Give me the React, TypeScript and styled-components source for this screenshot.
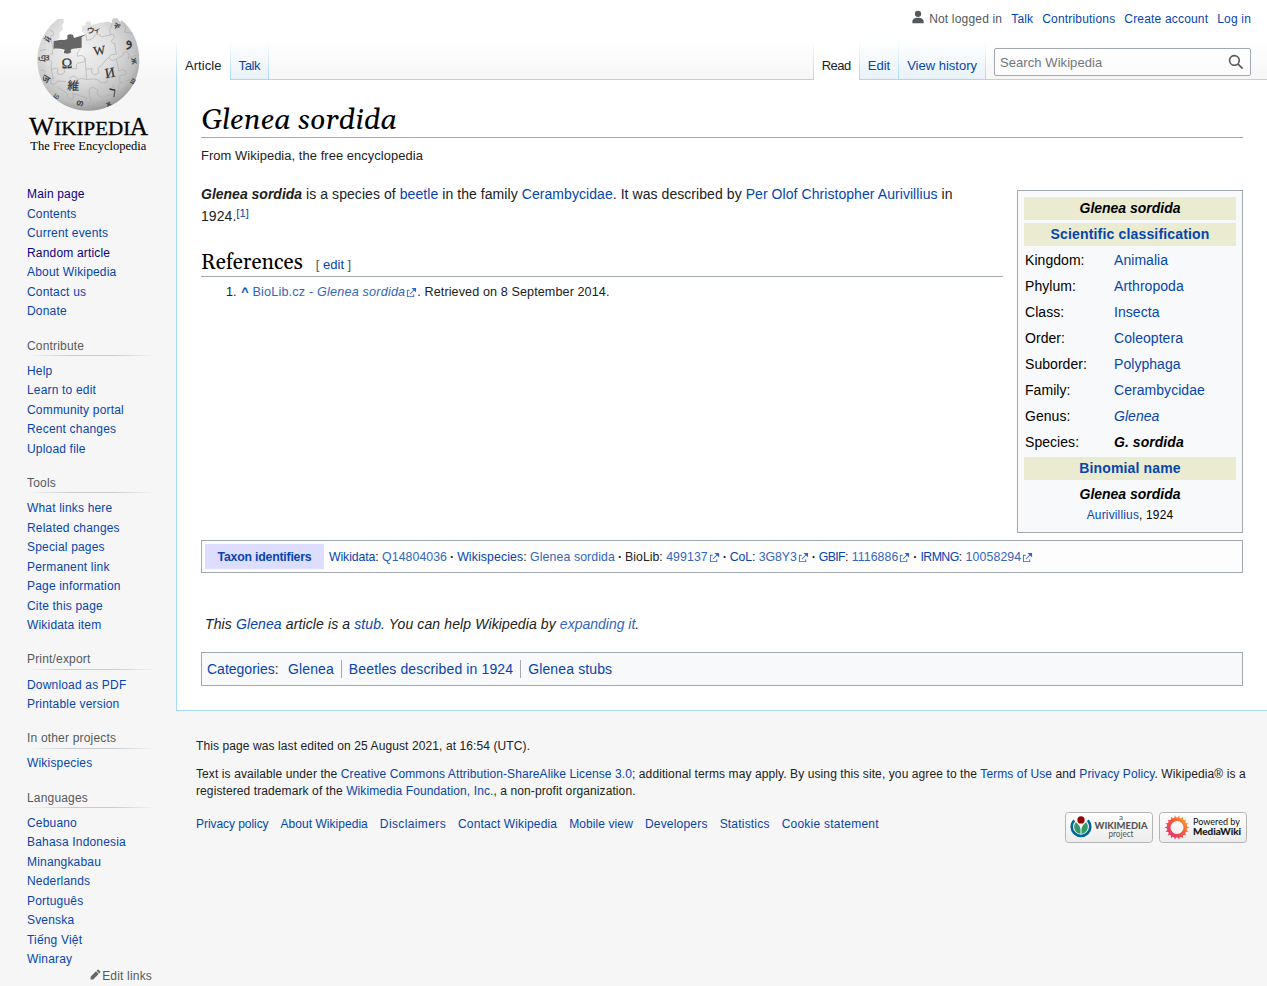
import React from 'react';
import styled, { createGlobalStyle } from 'styled-components';

const GlobalStyle = createGlobalStyle`
  *, *::before, *::after { box-sizing: border-box; }
  html, body { margin: 0; padding: 0; }
  body { background: #f6f6f6; font-family: "Liberation Sans", Arial, sans-serif; color: #202122; }
  h1, h2, h3, p, ul, ol { margin: 0; padding: 0; font-weight: normal; }
  ul, ol { list-style: none; }
`;

const serif = `"Linux Libertine", Georgia, Gelasio, "Liberation Serif", serif`;

const Link = styled.a<{ $visited?: boolean; $external?: boolean; $track?: number }>`
  color: ${(p) => (p.$visited ? '#0b0080' : p.$external ? '#3366bb' : '#0645ad')};
  letter-spacing: ${(p) => (p.$track === undefined ? 'inherit' : `${p.$track}px`)};
  text-decoration: none;
  white-space: nowrap;
`;

const Page = styled.div`
  display: grid;
  grid-template-columns: 176px 1fr;
  min-height: 986px;
  background: linear-gradient(to bottom, #fff 50%, #f6f6f6 100%) top / 100% 80px no-repeat #f6f6f6;
`;

const Sidebar = styled.aside`
  display: flex;
  flex-direction: column;
  letter-spacing: 0.18px;
`;

const Logo = styled.svg`
  display: block;
  width: 176px;
  height: 160px;
  margin-bottom: 25.4px;
  letter-spacing: 0;
`;

const Portal = styled.nav`
  padding: 0 19px 14.7px 27px;
  font-size: 12px;
`;

const PortalHeading = styled.h3`
  font-size: 12px;
  line-height: 19.5px;
  color: #54595d;
  margin-bottom: 5.7px;
  background: linear-gradient(to right, rgba(200, 204, 209, 0) 0, #c8ccd1 33%, #c8ccd1 66%, rgba(200, 204, 209, 0) 100%) bottom / 100% 1px no-repeat;
`;

const PortalItem = styled.li`
  line-height: 13.5px;
  padding: 3px 0;
`;

const EditLinks = styled.div`
  display: flex;
  align-items: center;
  justify-content: flex-end;
  gap: 1px;
  margin-top: -17.4px;
  padding-right: 24px;
  font-size: 12px;
  line-height: 18px;
  color: #54595d;
  svg { margin-top: -3px; }
`;

const Column = styled.div`
  min-width: 0;
  display: flex;
  flex-direction: column;
`;

const Header = styled.header`
  height: 80px;
  display: flex;
  flex-direction: column;
`;

const Personal = styled.ul`
  height: 40px;
  display: flex;
  justify-content: flex-end;
  gap: 9px;
  padding: 12px 16px 0 0;
  font-size: 12px;
  line-height: 14px;
  letter-spacing: 0.18px;
`;

const Anonymous = styled.li`
  display: flex;
  gap: 4px;
  color: #54595d;
  svg { margin-top: -2px; }
`;

const fade = 'linear-gradient(to bottom, #fff 0, #a7d7f9 100%)';

const TabBar = styled.div`
  height: 40px;
  display: flex;
  background: ${fade} left / 1px 100% no-repeat, linear-gradient(#a7d7f9, #a7d7f9) bottom / 100% 1px no-repeat;
`;

const Tabs = styled.ul<{ $right?: boolean }>`
  display: flex;
  padding-left: 1px;
  margin-left: ${(p) => (p.$right ? 'auto' : '0')};
  background: ${fade} left / 1px 100% no-repeat;
`;

const Tab = styled.li<{ $selected?: boolean; $track?: number }>`
  padding: 18px 8px 0;
  border-right: 1px solid transparent;
  font-size: 13px;
  line-height: 15px;
  letter-spacing: ${(p) => p.$track ?? 0}px;
  white-space: nowrap;
  color: #202122;
  background: ${fade} right / 1px 100% no-repeat border-box,
    ${(p) =>
      p.$selected
        ? 'linear-gradient(#fff, #fff)'
        : 'linear-gradient(#a7d7f9, #a7d7f9) bottom / 100% 1px no-repeat, linear-gradient(to bottom, #fff 0, #e8f2f8 100%)'};
`;

const Search = styled.div`
  width: 257px;
  height: 28px;
  margin: 8px 16px 0 8px;
  padding: 0 6px 0 5px;
  display: flex;
  align-items: center;
  justify-content: space-between;
  border: 1px solid #a2a9b1;
  border-radius: 2px;
  background: rgba(255, 255, 255, 0.5);
  font-size: 13px;
  letter-spacing: 0.07px;
  color: #72777d;
`;

const Content = styled.main`
  border-left: 1px solid #a7d7f9;
  border-bottom: 1px solid #a7d7f9;
  background: #fff;
  padding: 20px 24px 24px;
  font-size: 14px;
  line-height: 22.4px;
`;

const Title = styled.h1`
  height: 38px;
  border-bottom: 1px solid #a2a9b1;
  font-family: ${serif};
  font-size: 28.8px;
  line-height: 41px;
  font-style: italic;
  color: #000;
`;

const Tagline = styled.div`
  margin-top: 7px;
  font-size: 12.88px;
  line-height: 21px;
  letter-spacing: 0.08px;
`;

const Body = styled.div`
  display: flex;
  gap: 14px;
  margin-top: 17px;
`;

const Article = styled.div`
  flex: 1;
`;

const Lead = styled.p`
  letter-spacing: 0.064px;
  b { letter-spacing: 0; }
`;

const NoWrap = styled.span`
  white-space: nowrap;
`;

const Cite = styled.sup`
  font-size: 11.2px;
  line-height: 1;
  vertical-align: 4px;
`;

const SectionHeading = styled.h2`
  margin-top: 19.2px;
  height: 30px;
  border-bottom: 1px solid #a2a9b1;
  font-family: ${serif};
  font-size: 21px;
  line-height: 32px;
  color: #000;
`;

const EditSection = styled.span`
  margin-left: 13px;
  font-family: "Liberation Sans", Arial, sans-serif;
  font-size: 13px;
  color: #54595d;
`;

const References = styled.ol`
  margin-top: 5.2px;
  padding-left: 25px;
  font-size: 12.6px;
  line-height: 20.2px;
  letter-spacing: 0.1px;
`;

const BackLink = styled(Link)`
  font-weight: bold;
  margin: 0 0 0 1px;
`;

const Infobox = styled.aside`
  width: 226px;
  height: 343px;
  margin-top: 7px;
  padding: 6px;
  border: 1px solid #a2a9b1;
  background: #f8f9fa;
  color: #000;
  display: flex;
  flex-direction: column;
  gap: 3px;
  line-height: 21px;
  letter-spacing: 0.05px;
`;

const BoxBand = styled.div<{ $plain?: boolean }>`
  height: 23px;
  padding-top: 1px;
  text-align: center;
  font-weight: bold;
  background: ${(p) => (p.$plain ? 'transparent' : 'rgb(235, 235, 210)')};
  i { letter-spacing: -0.02px; }
`;

const BoxRow = styled.div`
  height: 23px;
  padding: 1px;
  display: grid;
  grid-template-columns: 89px 1fr;
`;

const Authority = styled.div`
  margin-top: -4px;
  text-align: center;
  font-size: 11.9px;
  letter-spacing: 0.19px;
`;

const Taxonbar = styled.div`
  height: 33px;
  margin-top: 7px;
  padding: 3px;
  display: flex;
  border: 1px solid #a2a9b1;
  background: #fdfdfd;
  font-size: 12.32px;
  line-height: 26px;
`;

const TaxonHeading = styled.div`
  width: 119px;
  height: 25px;
  margin-right: 5px;
  text-align: center;
  font-weight: bold;
  background: #ddf;
`;

const Dot = styled.b`
  margin: 0 3px;
`;

const Stub = styled.p`
  margin: 40px 0 0 4px;
  font-style: italic;
  letter-spacing: 0.115px;
`;

const Categories = styled.div`
  height: 34px;
  margin-top: 17px;
  padding: 5px;
  display: flex;
  align-items: center;
  border: 1px solid #a2a9b1;
  background: #f8f9fa;
`;

const Category = styled.span<{ $first?: boolean }>`
  padding: 0 7px 0 ${(p) => (p.$first ? 5.6 : 7)}px;
  line-height: 18px;
  letter-spacing: ${(p) => (p.$first ? 0.1 : 0.13)}px;
  border-left: ${(p) => (p.$first ? 'none' : '1px solid #a2a9b1')};
`;

const Footer = styled.footer`
  padding: 26.8px 20px 0;
  font-size: 12px;
  line-height: 16.8px;
`;

const FooterText = styled.p`
  margin: 0 -6px 11.2px 0;
  letter-spacing: 0.098px;
`;

const FooterRow = styled.div`
  display: flex;
  justify-content: space-between;
  margin-top: 12.6px;
`;

const FooterLinks = styled.div`
  display: flex;
  gap: 12px;
  padding-top: 4px;
`;

const Badges = styled.div`
  display: flex;
  gap: 6px;
`;

const ExtSvg = styled.svg`
  width: 11px;
  height: 11px;
  margin-left: 1px;
  vertical-align: -1.5px;
`;

const ExternalIcon = () => (
  <ExtSvg viewBox="0 0 12 12">
    <path fill="#36c" d="M6 1h5v5L8.86 3.85 4.7 8 4 7.3l4.15-4.16zM2 3h2v1H2v6h6V8h1v2a1 1 0 0 1-1 1H2a1 1 0 0 1-1-1V4a1 1 0 0 1 1-1" />
  </ExtSvg>
);

const glyphs: [string, number, number, number, number][] = [
  ['Ω', 201, 204, 43, -2],
  ['W', 298, 164, 38, -8],
  ['И', 330, 232, 42, -10],
  ['維', 220, 270, 35, 4],
  ['ウ', 272, 100, 24, 8],
  ['ィ', 292, 98, 22, 8],
  ['و', 384, 136, 44, -20],
  ['ר', 338, 290, 42, 8],
  ['თ', 240, 317, 26, 14],
  ['й', 142, 126, 28, -55],
  ['ঞ', 131, 186, 34, 0],
  ['ज', 138, 246, 30, 30],
  ['ம', 172, 297, 22, 40],
  ['ቐ', 352, 86, 26, 30],
  ['ж', 405, 192, 28, 80],
  ['ш', 397, 250, 22, -60],
  ['Ж', 326, 318, 16, -24],
];

const WikipediaLogo = () => (
  <Logo viewBox="0 0 528 480">
    <defs>
      <radialGradient id="globe" cx="0.42" cy="0.34" r="0.72">
        <stop offset="0" stopColor="#f2f2f2" />
        <stop offset="0.45" stopColor="#dfdfdf" />
        <stop offset="0.78" stopColor="#bebebe" />
        <stop offset="1" stopColor="#8a8a8a" />
      </radialGradient>
    </defs>
    <path
      fill="url(#globe)"
      d="M190 57 C193 66 190 73 185 76 C191 84 188 93 180 96 C176 103 183 108 176 118 L161 122 L160 146 L190 149 Q184 160 196 162 Q212 163 214 154 Q206 147 222 145 L245 143 L245 110 L260 104 L246 96 L246 78 L257 76 Q254 64 266 64 Q276 66 272 76 L300 68 L326 65 L337 70 Q332 55 344 55 L354 56 Q355 64 362 66 L364 60 C398 86 418 132 418 180 C418 266 350 332 265 332 C180 332 112 266 112 180 C112 130 138 82 174 57 Z"
    />
    <path
      fill="#666"
      d="M161 123 L184 119 Q193 122 202 117 L202 106 Q210 100 219 105 L222 114 L244 107 L260 102 L245 112 L245 143 L219 146 Q208 149 214 156 Q208 163 194 160 Q188 158 195 149 Q180 145 160 146 Z"
    />
    <g fill="none" stroke="#a8a8a8" strokeWidth="1.8">
      <path d="M149 90 Q164 94 160 106 Q148 104 153 119 L160 148 Q153 151 158 162 Q145 160 146 180 Q160 182 153 197 L154 209 Q175 200 174 210 Q166 226 186 223 Q198 218 192 205 L230 206 Q225 188 240 188 Q258 188 255 174 Q246 162 233 169 Q228 163 241 146" />
      <path d="M258 105 L260 121 Q282 118 282 108 Q297 95 304 111 L333 104 Q326 89 332 84 Q336 72 337 70" />
      <path d="M333 104 Q347 101 341 116 Q326 127 344 131 L349 162 Q332 162 326 172 Q337 187 349 177 L370 165 Q372 148 384 159 Q391 168 384 174 L411 165" />
      <path d="M255 174 L258 208 L277 206 Q269 220 285 225 Q303 220 293 205 L305 196 Q319 178 325 173 M258 208 L260 239 Q239 231 233 242 Q228 219 208 235 M260 239 Q285 234 296 241 Q300 253 322 246 Q319 227 338 232" />
      <path d="M154 209 L160 237 Q148 235 153 251 Q166 257 173 243 L198 245 M173 262 L202 281 Q199 302 218 297 Q224 287 217 280 L260 294 Q252 304 265 310 Q280 304 269 291 L267 270 Q276 254 294 272 Q285 289 311 292 L334 282 M340 254 Q342 267 325 268 M349 177 L357 213 Q373 203 380 218 Q372 229 359 226 L360 250 L391 238" />
      <path d="M121 211 Q136 208 134 218 M120 152 L139 148 M373 74 Q382 84 373 96 L397 100 M357 252 L353 275 L373 280" />
    </g>
    {glyphs.map(([char, x, y, size, angle]) => (
      <text
        key={char}
        x={x}
        y={y}
        fontSize={size}
        textAnchor="middle"
        fill="#333"
        stroke="#333"
        strokeWidth="0.6"
        fontFamily='"Liberation Serif", "Noto Sans CJK JP", "DejaVu Sans", serif'
        transform={`rotate(${angle} ${x} ${y - size / 3})`}
      >
        {char}
      </text>
    ))}
    <g fontFamily='"Liberation Serif", serif' fill="#000">
      <text x="87" y="406" fontSize="75" textLength="76" lengthAdjust="spacingAndGlyphs" stroke="#000" strokeWidth="0.8">W</text>
      <text x="163" y="406" fontSize="56" textLength="228" lengthAdjust="spacingAndGlyphs" stroke="#000" strokeWidth="0.8">IKIPEDI</text>
      <text x="389" y="406" fontSize="75" textLength="55" lengthAdjust="spacingAndGlyphs" stroke="#000" strokeWidth="0.8">A</text>
      <text x="91" y="450" fontSize="39" textLength="348" lengthAdjust="spacingAndGlyphs">The Free Encyclopedia</text>
    </g>
  </Logo>
);

const BadgeFrame = ({ id, children }: { id: string; children: React.ReactNode }) => (
  <svg width="88" height="31" viewBox="0 0 88 31">
    <defs>
      <linearGradient id={id} x2="0" y2="1">
        <stop offset="0" stopColor="#fff" />
        <stop offset="1" stopColor="#ececec" />
      </linearGradient>
    </defs>
    <rect x="0.5" y="0.5" width="87" height="30" rx="3" fill={`url(#${id})`} stroke="#b4b4b4" />
    {children}
  </svg>
);

const WikimediaBadge = () => (
  <BadgeFrame id="wm">
    <path d="M9.2 8.3A9.3 9.3 0 1 0 22.8 8.3" fill="none" stroke="#069" strokeWidth="2.6" />
    <path d="M10.9 10.3A6.9 6.9 0 0 0 15.5 21.7V17.4Q15.3 13.6 10.9 10.3zM21.1 10.3A6.9 6.9 0 0 1 16.5 21.7V17.4Q16.7 13.6 21.1 10.3z" fill="#396" />
    <circle cx="16" cy="7.9" r="3.6" fill="#900" />
    <g fontFamily="Lato, sans-serif" fill="#555" textAnchor="middle">
      <text x="56" y="8" fontSize="8">a</text>
      <text x="56" y="16.8" fontSize="8.4" fontWeight="900" textLength="53" lengthAdjust="spacingAndGlyphs">WIKIMEDIA</text>
      <text x="56" y="25" fontSize="8.6" textLength="25" lengthAdjust="spacingAndGlyphs">project</text>
    </g>
  </BadgeFrame>
);

const petals = Array.from({ length: 18 }, (_, i) => i * 20);

const MediaWikiBadge = () => (
  <BadgeFrame id="mw">
    <defs>
      <linearGradient id="flower" gradientUnits="userSpaceOnUse" x1="10" y1="24" x2="28" y2="8">
        <stop offset="0" stopColor="#e8336d" />
        <stop offset="0.55" stopColor="#f4583c" />
        <stop offset="1" stopColor="#fca32c" />
      </linearGradient>
    </defs>
    <circle cx="18" cy="15.5" r="8.3" fill="none" stroke="url(#flower)" strokeWidth="3.6" />
    <path
      fill="url(#flower)"
      d={petals
        .map((deg) => {
          const at = (r: number, d: number) => {
            const a = ((deg + d) * Math.PI) / 180;
            return `${(18 + r * Math.cos(a)).toFixed(2)} ${(15.5 + r * Math.sin(a)).toFixed(2)}`;
          };
          return `M${at(9, -9)}L${at(12.4, 0)}L${at(9, 9)}Z`;
        })
        .join('')}
    />
    <g fontFamily="Lato, sans-serif" fill="#111">
      <text x="34" y="12.8" fontSize="9" textLength="47" lengthAdjust="spacingAndGlyphs">Powered by</text>
      <text x="34" y="22.6" fontSize="9.3" fontWeight="700" stroke="#111" strokeWidth="0.15" textLength="48" lengthAdjust="spacingAndGlyphs">MediaWiki</text>
    </g>
  </BadgeFrame>
);

const portals: { title?: string; items: string[] }[] = [
  { items: ['Main page', 'Contents', 'Current events', 'Random article', 'About Wikipedia', 'Contact us', 'Donate'] },
  { title: 'Contribute', items: ['Help', 'Learn to edit', 'Community portal', 'Recent changes', 'Upload file'] },
  { title: 'Tools', items: ['What links here', 'Related changes', 'Special pages', 'Permanent link', 'Page information', 'Cite this page', 'Wikidata item'] },
  { title: 'Print/export', items: ['Download as PDF', 'Printable version'] },
  { title: 'In other projects', items: ['Wikispecies'] },
  { title: 'Languages', items: ['Cebuano', 'Bahasa Indonesia', 'Minangkabau', 'Nederlands', 'Português', 'Svenska', 'Tiếng Việt', 'Winaray'] },
];
const visited = ['Main page', 'Random article'];

const ranks: [string, React.ReactNode][] = [
  ['Kingdom:', <Link>Animalia</Link>],
  ['Phylum:', <Link>Arthropoda</Link>],
  ['Class:', <Link>Insecta</Link>],
  ['Order:', <Link>Coleoptera</Link>],
  ['Suborder:', <Link>Polyphaga</Link>],
  ['Family:', <Link>Cerambycidae</Link>],
  ['Genus:', <i><Link>Glenea</Link></i>],
  ['Species:', <b><i>G. sordida</i></b>],
];

const taxa: { name: string; nameTrack: number; id: string; idTrack: number; plain?: boolean; icon?: boolean }[] = [
  { name: 'Wikidata', nameTrack: -0.12, id: 'Q14804036', idTrack: 0.06 },
  { name: 'Wikispecies', nameTrack: 0.1, id: 'Glenea sordida', idTrack: 0.1 },
  { name: 'BioLib', nameTrack: 0, id: '499137', idTrack: 0.08, plain: true, icon: true },
  { name: 'CoL', nameTrack: -0.15, id: '3G8Y3', idTrack: -0.1, icon: true },
  { name: 'GBIF', nameTrack: -0.65, id: '1116886', idTrack: 0.06, icon: true },
  { name: 'IRMNG', nameTrack: -0.55, id: '10058294', idTrack: 0.12, icon: true },
];

const footerLinks: [string, number][] = [
  ['Privacy policy', -0.06],
  ['About Wikipedia', 0.04],
  ['Disclaimers', 0.38],
  ['Contact Wikipedia', 0.14],
  ['Mobile view', 0.1],
  ['Developers', 0.2],
  ['Statistics', 0.2],
  ['Cookie statement', 0.24],
];

export default function App() {
  return (
    <>
      <GlobalStyle />
      <Page>
        <Sidebar>
          <WikipediaLogo />
          {portals.map((portal, i) => (
            <Portal key={i}>
              {portal.title && <PortalHeading>{portal.title}</PortalHeading>}
              <ul>
                {portal.items.map((item) => (
                  <PortalItem key={item}>
                    <Link $visited={visited.includes(item)}>{item}</Link>
                  </PortalItem>
                ))}
              </ul>
            </Portal>
          ))}
          <EditLinks>
            <svg width="11" height="11" viewBox="0 0 20 20" fill="#666">
              <path d="M16.77 8l1.94-2a1 1 0 0 0 0-1.41l-3.34-3.3a1 1 0 0 0-1.41 0L12 3.23zM1 14.25V19h4.75l9.96-9.96-4.75-4.75z" />
            </svg>
            Edit links
          </EditLinks>
        </Sidebar>
        <Column>
          <Header>
            <Personal>
              <Anonymous>
                <svg width="14" height="14" viewBox="0 0 20 20" fill="#54595d">
                  <path d="M10 11c-5.92 0-8 3-8 5v3h16v-3c0-2-2.08-5-8-5z" />
                  <circle cx="10" cy="5.5" r="4.5" />
                </svg>
                Not logged in
              </Anonymous>
              {['Talk', 'Contributions', 'Create account', 'Log in'].map((label) => (
                <li key={label}><Link>{label}</Link></li>
              ))}
            </Personal>
            <TabBar>
              <Tabs>
                <Tab $selected $track={0.06}>Article</Tab>
                <Tab $track={-0.35}><Link>Talk</Link></Tab>
              </Tabs>
              <Tabs $right>
                <Tab $selected $track={-0.5}>Read</Tab>
                <Tab><Link>Edit</Link></Tab>
                <Tab><Link>View history</Link></Tab>
              </Tabs>
              <Search>
                Search Wikipedia
                <svg width="16" height="16" viewBox="0 0 20 20" fill="#54595d">
                  <path fillRule="evenodd" d="M12.2 13.6a7 7 0 1 1 1.4-1.4l5.4 5.4-1.4 1.4zM3 8a5 5 0 1 0 10 0A5 5 0 0 0 3 8z" />
                </svg>
              </Search>
            </TabBar>
          </Header>
          <Content>
            <Title>Glenea sordida</Title>
            <Tagline>From Wikipedia, the free encyclopedia</Tagline>
            <Body>
              <Article>
                <Lead>
                  <b><i>Glenea sordida</i></b> is a species of <Link>beetle</Link> in the family <Link>Cerambycidae</Link>. It was
                  described by <Link>Per Olof Christopher Aurivillius</Link> in <NoWrap>1924.<Cite><Link>[1]</Link></Cite></NoWrap>
                </Lead>
                <SectionHeading>
                  References
                  <EditSection>[ <Link>edit</Link> ]</EditSection>
                </SectionHeading>
                <References>
                  <li>
                    1. <BackLink>^</BackLink> <Link $external $track={0.2}>BioLib.cz - <i>Glenea sordida</i><ExternalIcon /></Link>. Retrieved on 8 September 2014.
                  </li>
                </References>
              </Article>
              <Infobox>
                <BoxBand><i>Glenea sordida</i></BoxBand>
                <BoxBand><Link $track={0.17}>Scientific classification</Link></BoxBand>
                {ranks.map(([rank, value]) => (
                  <BoxRow key={rank}>
                    <span>{rank}</span>
                    <span>{value}</span>
                  </BoxRow>
                ))}
                <BoxBand><Link $track={0.15}>Binomial name</Link></BoxBand>
                <BoxBand $plain><i>Glenea sordida</i></BoxBand>
                <Authority><Link>Aurivillius</Link>, 1924</Authority>
              </Infobox>
            </Body>
            <Taxonbar>
              <TaxonHeading><Link $track={-0.22}>Taxon identifiers</Link></TaxonHeading>
              <div>
                {taxa.map((taxon, i) => (
                  <React.Fragment key={taxon.name}>
                    {i > 0 && <Dot>·</Dot>}
                    {taxon.plain ? taxon.name : <Link $track={taxon.nameTrack}>{taxon.name}</Link>}:{' '}
                    <Link $external $track={taxon.idTrack}>{taxon.id}{taxon.icon && <ExternalIcon />}</Link>
                  </React.Fragment>
                ))}
              </div>
            </Taxonbar>
            <Stub>
              This <Link>Glenea</Link> article is a <Link>stub</Link>. You can help Wikipedia by <Link $external $track={0}>expanding it</Link>.
            </Stub>
            <Categories>
              <span><Link>Categories</Link>:&nbsp;</span>
              {['Glenea', 'Beetles described in 1924', 'Glenea stubs'].map((name, i) => (
                <Category key={name} $first={i === 0}><Link>{name}</Link></Category>
              ))}
            </Categories>
          </Content>
          <Footer>
            <FooterText>This page was last edited on 25 August 2021, at 16:54 (UTC).</FooterText>
            <FooterText>
              Text is available under the <Link>Creative Commons Attribution-ShareAlike License 3.0</Link>; additional terms may
              apply. By using this site, you agree to the <Link>Terms of Use</Link> and <Link>Privacy Policy</Link>. Wikipedia® is
              a registered trademark of the <Link>Wikimedia Foundation, Inc.</Link>, a non-profit organization.
            </FooterText>
            <FooterRow>
              <FooterLinks>
                {footerLinks.map(([label, track]) => <Link key={label} $track={track}>{label}</Link>)}
              </FooterLinks>
              <Badges>
                <WikimediaBadge />
                <MediaWikiBadge />
              </Badges>
            </FooterRow>
          </Footer>
        </Column>
      </Page>
    </>
  );
}
